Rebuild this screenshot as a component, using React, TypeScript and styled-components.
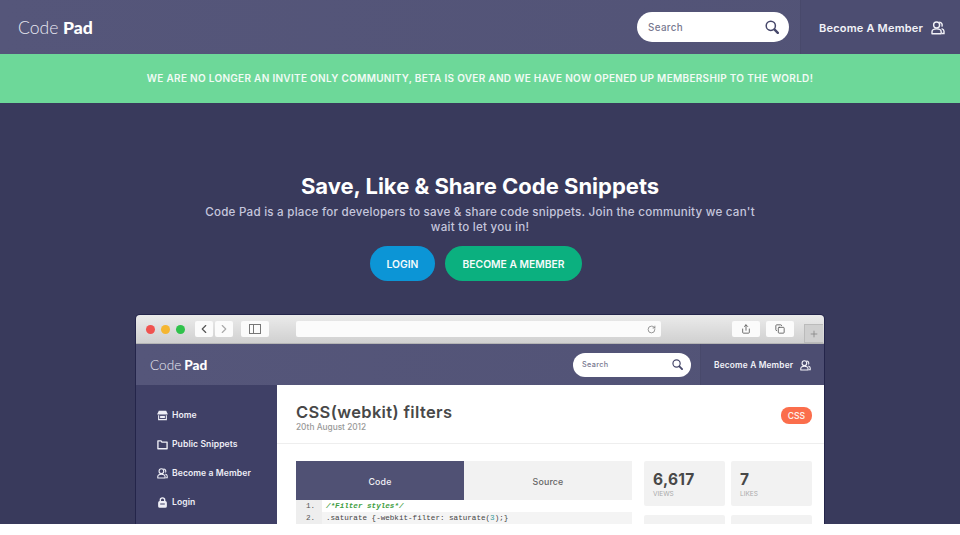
import React from "react";
import styled, { createGlobalStyle } from "styled-components";
import { RotateCw, ChevronLeft, ChevronRight, Share, Copy, Plus } from "lucide-react";

const fontStack = `"Inter", "Noto Sans", sans-serif`;
const slate = "#55567a";
const navy = "#393a5c";

const GlobalStyle = createGlobalStyle`
  html, body {
    margin: 0;
    padding: 0;
    background: #fff;
    font-family: ${fontStack};
  }
  * { box-sizing: border-box; }
`;

const Page = styled.div`
  width: 960px;
  height: 535px;
  overflow: hidden;
  background: #fff;
`;

const Header = styled.header<{ $mini?: boolean }>`
  display: flex;
  align-items: stretch;
  height: ${(p) => (p.$mini ? 41 : 54)}px;
  background: linear-gradient(90deg, ${slate}, #525376);
`;

const Logo = styled.div<{ $mini?: boolean }>`
  flex: 1;
  display: flex;
  align-items: center;
  padding-left: ${(p) => (p.$mini ? 14 : 18)}px;
  font-family: "Lato", sans-serif;
  font-size: ${(p) => (p.$mini ? 13.6 : 17.6)}px;
  font-weight: 300;
  color: #e8e8f2;
  b {
    font-weight: 900;
    color: #fff;
    margin-left: ${(p) => (p.$mini ? 3 : 4.5)}px;
  }
`;

const SearchBox = styled.div<{ $mini?: boolean }>`
  align-self: center;
  display: flex;
  align-items: center;
  justify-content: space-between;
  width: ${(p) => (p.$mini ? 118 : 152)}px;
  height: ${(p) => (p.$mini ? 24 : 30)}px;
  margin-right: ${(p) => (p.$mini ? 9 : 11)}px;
  padding: 0 ${(p) => (p.$mini ? 8 : 10)}px 0 ${(p) => (p.$mini ? 9 : 11)}px;
  background: #fff;
  border-radius: 15px;
  font-size: ${(p) => (p.$mini ? 7.3 : 9.8)}px;
  font-weight: 500;
  letter-spacing: 0.35px;
  color: #77788f;
  svg { color: #46476a; }
`;

const MemberLink = styled.div<{ $mini?: boolean }>`
  display: flex;
  align-items: center;
  justify-content: space-between;
  width: ${(p) => (p.$mini ? 124 : 160)}px;
  padding: ${(p) => (p.$mini ? 1 : 2)}px ${(p) => (p.$mini ? 13 : 15)}px 0 ${(p) => (p.$mini ? 13 : 18)}px;
  background: #4c4d71;
  border-left: 1px solid #48496b;
  font-size: ${(p) => (p.$mini ? 8.3 : 11)}px;
  font-weight: 600;
  letter-spacing: 0.2px;
  color: #f2f2f8;
  white-space: nowrap;
`;

const Banner = styled.div`
  display: flex;
  align-items: center;
  justify-content: center;
  height: 49px;
  padding-bottom: 1px;
  background: #6dd899;
  color: #f1fbf5;
  font-size: 10px;
  font-weight: 600;
  letter-spacing: 0.3px;
  white-space: nowrap;
`;

const Hero = styled.section`
  display: flex;
  flex-direction: column;
  align-items: center;
  height: 421px;
  padding-top: 70px;
  overflow: hidden;
  background: ${navy};
`;

const Title = styled.h1`
  margin: 0;
  font-size: 22px;
  line-height: 26px;
  font-weight: 700;
  color: #fff;
`;

const Lead = styled.p`
  width: 560px;
  margin: 6px 0 0;
  font-size: 11.6px;
  line-height: 15px;
  font-weight: 500;
  letter-spacing: 0.24px;
  text-align: center;
  color: #c5c6dc;
`;

const Actions = styled.div`
  display: flex;
  gap: 10px;
  margin-top: 11px;
  padding-right: 8px;
`;

const PillButton = styled.div<{ $color: string; $width: number }>`
  display: flex;
  align-items: center;
  justify-content: center;
  width: ${(p) => p.$width}px;
  height: 35px;
  border-radius: 18px;
  background: ${(p) => p.$color};
  color: #f4fbfb;
  font-size: 10.3px;
  font-weight: 600;
`;

const Browser = styled.div`
  flex: none;
  width: 688px;
  margin-top: 34px;
  border-radius: 4px 4px 0 0;
  overflow: hidden;
  box-shadow: 0 0 0 1px #24254a;
`;

const Chrome = styled.div`
  display: flex;
  align-items: center;
  height: 29px;
  padding-left: 10px;
  background: linear-gradient(#ebebeb, #d0d0d0);
  border-bottom: 1px solid #b5b5b5;
`;

const Dot = styled.span<{ $color: string }>`
  width: 9px;
  height: 9px;
  margin-right: 6px;
  border-radius: 50%;
  background: ${(p) => p.$color};
`;

const ChromeButton = styled.div<{ $width: number; $gap?: number }>`
  display: flex;
  align-items: center;
  justify-content: center;
  width: ${(p) => p.$width}px;
  height: 16px;
  margin-left: ${(p) => p.$gap ?? 2}px;
  border-radius: 2px;
  background: #fbfbfb;
  color: #555;
`;

const AddressBar = styled.div`
  display: flex;
  align-items: center;
  justify-content: flex-end;
  width: 365px;
  height: 16px;
  margin-left: 27px;
  padding-right: 5px;
  border-radius: 2px;
  background: #fbfbfb;
  color: #777;
`;

const NewTab = styled.div`
  align-self: flex-end;
  display: flex;
  align-items: center;
  justify-content: center;
  width: 19px;
  height: 19px;
  margin-left: 10px;
  background: #cfcfcf;
  border: 1px solid #bbb;
  border-right: 0;
  color: #888;
`;

const AppBody = styled.div`
  display: flex;
  height: 139px;
  background: #fff;
`;

const Sidebar = styled.nav`
  flex: none;
  display: flex;
  flex-direction: column;
  gap: 14.7px;
  width: 141px;
  padding: 23px 0 0 21px;
  background: #3f4066;
`;

const SideItem = styled.div`
  display: flex;
  align-items: center;
  gap: 4px;
  height: 14.3px;
  font-size: 8.6px;
  font-weight: 600;
  letter-spacing: 0.08px;
  color: #eeeef6;
  white-space: nowrap;
  svg { flex: none; }
`;

const Content = styled.main`
  flex: 1;
  min-width: 0;
  overflow: hidden;
`;

const SnippetHead = styled.div`
  display: flex;
  justify-content: space-between;
  align-items: flex-start;
  height: 59px;
  padding: 17px 12px 0 19px;
  border-bottom: 1px solid #eeeeee;
`;

const SnippetTitle = styled.div`
  font-size: 16.5px;
  line-height: 20px;
  font-weight: 600;
  letter-spacing: 0.35px;
  color: #484848;
`;

const SnippetDate = styled.div`
  font-size: 8.3px;
  line-height: 10px;
  font-weight: 500;
  color: #999;
`;

const Tag = styled.div`
  display: flex;
  align-items: center;
  justify-content: center;
  width: 31px;
  height: 17px;
  margin-top: 5px;
  border-radius: 8px;
  background: #fb6e4c;
  color: #fdeee8;
  font-size: 8.5px;
  font-weight: 600;
`;

const SnippetBody = styled.div`
  display: flex;
  gap: 12px;
  padding: 17px 12px 0 19px;
`;

const CodeColumn = styled.div`
  width: 336px;
`;

const Tabs = styled.div`
  display: flex;
  height: 39px;
`;

const Tab = styled.div<{ $active?: boolean }>`
  display: flex;
  align-items: center;
  justify-content: center;
  width: 168px;
  padding-top: 1px;
  background: ${(p) => (p.$active ? "#505174" : "#f2f2f2")};
  color: ${(p) => (p.$active ? "#f0f0f6" : "#666")};
  font-size: 8.8px;
  font-weight: 500;
  letter-spacing: 0.2px;
`;

const CodeLine = styled.div<{ $shaded?: boolean }>`
  display: flex;
  height: 12px;
  background: ${(p) => (p.$shaded ? "#f4f4f4" : "#fff")};
  font-family: "Liberation Mono", monospace;
  font-size: 7.6px;
  line-height: 12px;
  color: #444;
  white-space: nowrap;
`;

const LineNumber = styled.span`
  flex: none;
  width: 26px;
  padding-right: 7px;
  text-align: right;
  background: #eeeeee;
  color: #555;
`;

const LineText = styled.span<{ $comment?: boolean }>`
  padding-left: 4px;
  font-style: ${(p) => (p.$comment ? "italic" : "normal")};
  font-weight: ${(p) => (p.$comment ? 700 : 400)};
  color: ${(p) => (p.$comment ? "#3f9e3f" : "#444")};
  i {
    font-style: normal;
    color: #3a9c9c;
  }
`;

const Stats = styled.div`
  display: grid;
  grid-template-columns: 81px 81px;
  gap: 9px 6px;
`;

const StatCard = styled.div`
  height: 45px;
  padding: 11px 9px 0;
  border-radius: 2px;
  background: #f2f2f2;
`;

const StatNumber = styled.div`
  font-size: 15.5px;
  line-height: 15px;
  font-weight: 700;
  letter-spacing: 0.3px;
  color: #484848;
`;

const StatLabel = styled.div`
  margin-top: 3px;
  font-size: 6.5px;
  line-height: 8px;
  color: #aaa;
`;

function SearchGlyph({ size }: { size: number }) {
  return (
    <svg width={size} height={size} viewBox="0 0 14 14" fill="none" stroke="currentColor">
      <circle cx="5.8" cy="5.8" r="4.6" strokeWidth="1.5" />
      <path d="M9.4 9.4l3.4 3.4" strokeWidth="2.4" strokeLinecap="round" />
    </svg>
  );
}

function PeopleGlyph({ size }: { size: number }) {
  return (
    <svg width={size} height={size} viewBox="0 0 14 14" fill="none" stroke="currentColor" strokeWidth="1.4">
      <path d="M8.2 1.3a2.9 2.9 0 0 1 2.6 4.4M10.6 7.6c1.3.4 2.4 1.3 2.4 2.7v2.2h-2" />
      <circle cx="5.6" cy="4" r="3" />
      <path d="M1 12.8v-1.9c0-1.9 2-3 4.6-3s4.6 1.1 4.6 3v1.9z" strokeLinejoin="round" />
    </svg>
  );
}

function StoreGlyph({ size }: { size: number }) {
  return (
    <svg width={size} height={size} viewBox="0 0 12 12" fill="currentColor">
      <path d="M2 .8h8l1.6 3.4v.6H.4v-.6z" />
      <path d="M1.2 5.6h1.2v4.2h7.2V5.6h1.2v5.6H1.2z" />
      <rect x="3.4" y="6.4" width="5.2" height="2.4" />
    </svg>
  );
}

function FolderGlyph({ size }: { size: number }) {
  return (
    <svg width={size} height={size} viewBox="0 0 12 12" fill="none" stroke="currentColor" strokeWidth="1.5" strokeLinejoin="round">
      <path d="M1 2h3.4l1 1.4H11v7.2H1z" />
    </svg>
  );
}

function LockGlyph({ size }: { size: number }) {
  return (
    <svg width={size} height={size} viewBox="0 0 12 12" fill="none" stroke="currentColor" strokeWidth="1.5">
      <path d="M3.6 5.2V3.4a2.4 2.4 0 0 1 4.8 0v1.8" />
      <rect x="2" y="5.2" width="8" height="5.8" rx="1" fill="currentColor" />
      <path d="M3.5 7.6h5" stroke="#3f4066" strokeWidth="1.2" />
    </svg>
  );
}

const navItems = [
  { label: "Home", Icon: StoreGlyph },
  { label: "Public Snippets", Icon: FolderGlyph },
  { label: "Become a Member", Icon: PeopleGlyph },
  { label: "Login", Icon: LockGlyph },
];

function SiteHeader({ mini }: { mini?: boolean }) {
  return (
    <Header $mini={mini}>
      <Logo $mini={mini}>
        Code <b>Pad</b>
      </Logo>
      <SearchBox $mini={mini}>
        Search
        <SearchGlyph size={mini ? 11 : 14} />
      </SearchBox>
      <MemberLink $mini={mini}>
        Become A Member
        <PeopleGlyph size={mini ? 11 : 14} />
      </MemberLink>
    </Header>
  );
}

export default function App() {
  return (
    <Page>
      <GlobalStyle />
      <SiteHeader />
      <Banner>
        WE ARE NO LONGER AN INVITE ONLY COMMUNITY, BETA IS OVER AND WE HAVE NOW OPENED UP MEMBERSHIP TO THE WORLD!
      </Banner>
      <Hero>
        <Title>Save, Like &amp; Share Code Snippets</Title>
        <Lead>
          Code Pad is a place for developers to save &amp; share code snippets. Join the community we can't wait to let
          you in!
        </Lead>
        <Actions>
          <PillButton $color="#0c95d6" $width={65}>LOGIN</PillButton>
          <PillButton $color="#0bb07f" $width={137}>BECOME A MEMBER</PillButton>
        </Actions>
        <Browser>
          <Chrome>
            <Dot $color="#f0524f" />
            <Dot $color="#f5b631" />
            <Dot $color="#2fc24b" />
            <ChromeButton $width={18} $gap={4}><ChevronLeft size={14} /></ChromeButton>
            <ChromeButton $width={18}><ChevronRight size={14} color="#aaa" /></ChromeButton>
            <ChromeButton $width={28} $gap={8}>
              <svg width="12" height="10" viewBox="0 0 12 10" fill="none" stroke="#777">
                <rect x="0.5" y="0.5" width="11" height="9" />
                <path d="M4.5 0.5v9" />
              </svg>
            </ChromeButton>
            <AddressBar><RotateCw size={9} /></AddressBar>
            <ChromeButton $width={28} $gap={71}><Share size={10} /></ChromeButton>
            <ChromeButton $width={28} $gap={6}><Copy size={10} /></ChromeButton>
            <NewTab><Plus size={10} /></NewTab>
          </Chrome>
          <SiteHeader mini />
          <AppBody>
            <Sidebar>
              {navItems.map(({ label, Icon }) => (
                <SideItem key={label}>
                  <Icon size={11} />
                  {label}
                </SideItem>
              ))}
            </Sidebar>
            <Content>
              <SnippetHead>
                <div>
                  <SnippetTitle>CSS(webkit) filters</SnippetTitle>
                  <SnippetDate>20th August 2012</SnippetDate>
                </div>
                <Tag>CSS</Tag>
              </SnippetHead>
              <SnippetBody>
                <CodeColumn>
                  <Tabs>
                    <Tab $active>Code</Tab>
                    <Tab>Source</Tab>
                  </Tabs>
                  <CodeLine>
                    <LineNumber>1.</LineNumber>
                    <LineText $comment>/*Filter styles*/</LineText>
                  </CodeLine>
                  <CodeLine $shaded>
                    <LineNumber>2.</LineNumber>
                    <LineText>.saturate {"{-webkit-filter: saturate("}<i>3</i>{");}"}</LineText>
                  </CodeLine>
                </CodeColumn>
                <Stats>
                  <StatCard>
                    <StatNumber>6,617</StatNumber>
                    <StatLabel>VIEWS</StatLabel>
                  </StatCard>
                  <StatCard>
                    <StatNumber>7</StatNumber>
                    <StatLabel>LIKES</StatLabel>
                  </StatCard>
                  <StatCard />
                  <StatCard />
                </Stats>
              </SnippetBody>
            </Content>
          </AppBody>
        </Browser>
      </Hero>
    </Page>
  );
}
